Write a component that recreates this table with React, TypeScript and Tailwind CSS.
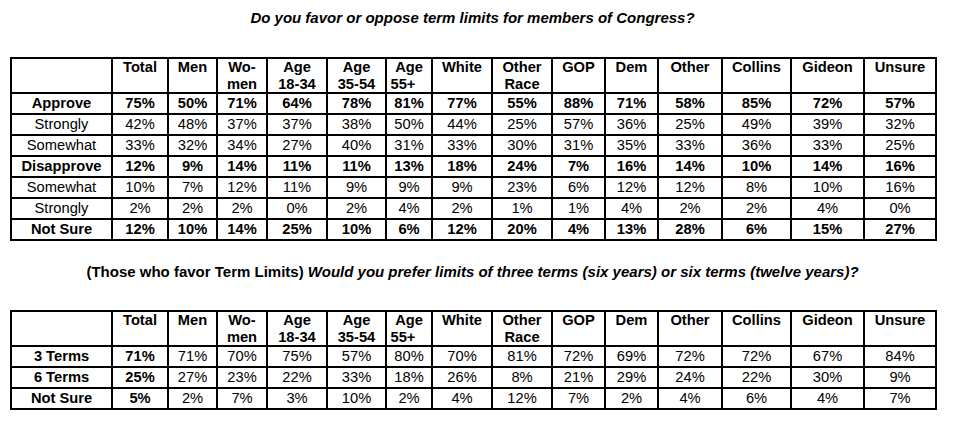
import React from "react";

const widths = [101, 56, 49, 50, 60, 59, 46, 60, 60, 53, 53, 64, 69, 73, 72];

const headers: React.ReactNode[] = [
  "",
  "Total",
  "Men",
  <>Wo-<br />men</>,
  <>Age<br />18-34</>,
  <>Age<br />35-54</>,
  <>Age<br /><span className="pr-[12px]">55+</span></>,
  "White",
  <>Other<br />Race</>,
  "GOP",
  "Dem",
  "Other",
  "Collins",
  "Gideon",
  "Unsure",
];

type Row = { label: string; values: number[]; bold: boolean; boldTotal?: boolean };

const table1: Row[] = [
  { label: "Approve", bold: true, values: [75, 50, 71, 64, 78, 81, 77, 55, 88, 71, 58, 85, 72, 57] },
  { label: "Strongly", bold: false, values: [42, 48, 37, 37, 38, 50, 44, 25, 57, 36, 25, 49, 39, 32] },
  { label: "Somewhat", bold: false, values: [33, 32, 34, 27, 40, 31, 33, 30, 31, 35, 33, 36, 33, 25] },
  { label: "Disapprove", bold: true, values: [12, 9, 14, 11, 11, 13, 18, 24, 7, 16, 14, 10, 14, 16] },
  { label: "Somewhat", bold: false, values: [10, 7, 12, 11, 9, 9, 9, 23, 6, 12, 12, 8, 10, 16] },
  { label: "Strongly", bold: false, values: [2, 2, 2, 0, 2, 4, 2, 1, 1, 4, 2, 2, 4, 0] },
  { label: "Not Sure", bold: true, values: [12, 10, 14, 25, 10, 6, 12, 20, 4, 13, 28, 6, 15, 27] },
];

const table2: Row[] = [
  { label: "3 Terms", bold: false, boldTotal: true, values: [71, 71, 70, 75, 57, 80, 70, 81, 72, 69, 72, 72, 67, 84] },
  { label: "6 Terms", bold: false, boldTotal: true, values: [25, 27, 23, 22, 33, 18, 26, 8, 21, 29, 24, 22, 30, 9] },
  { label: "Not Sure", bold: false, boldTotal: true, values: [5, 2, 7, 3, 10, 2, 4, 12, 7, 2, 4, 6, 4, 7] },
];

function DataTable({ rows }: { rows: Row[] }) {
  return (
    <table className="border-collapse table-fixed w-[925px] border-2 border-black text-[14.7px] text-black">
      <colgroup>
        {widths.map((w, i) => (
          <col key={i} style={{ width: w }} />
        ))}
      </colgroup>
      <thead>
        <tr>
          {headers.map((h, i) => (
            <th
              key={i}
              className="border-2 border-black p-0 align-top text-center font-bold leading-[16.5px] h-[33px]"
            >
              {h}
            </th>
          ))}
        </tr>
      </thead>
      <tbody>
        {rows.map((r, ri) => (
          <tr key={ri}>
            <td
              className={`border-2 border-black p-0 text-center leading-[19px] h-[19px] ${
                r.bold || r.boldTotal ? "font-bold" : "font-normal"
              }`}
            >
              {r.label}
            </td>
            {r.values.map((v, vi) => (
              <td
                key={vi}
                className={`border-2 border-black p-0 text-center leading-[19px] h-[19px] ${
                  r.bold || (r.boldTotal && vi === 0) ? "font-bold" : "font-normal"
                }`}
              >
                {v}%
              </td>
            ))}
          </tr>
        ))}
      </tbody>
    </table>
  );
}

export default function App() {
  return (
    <div
      className="w-[956px] h-[425px] bg-white overflow-hidden pl-[10px] pt-[9px]"
      style={{ fontFamily: '"Liberation Sans", Arial, Helvetica, sans-serif' }}
    >
      <div className="w-[925px] flex flex-col">
        <p className="text-center text-[15px] leading-[17px] font-bold italic text-black">
          Do you favor or oppose term limits for members of Congress?
        </p>
        <div className="mt-[31px]">
          <DataTable rows={table1} />
        </div>
        <p className="mt-[22px] text-center text-[15px] leading-[17px] font-bold text-black">
          (Those who favor Term Limits){" "}
          <span className="italic">
            Would you prefer limits of three terms (six years) or six terms (twelve years)?
          </span>
        </p>
        <div className="mt-[30px]">
          <DataTable rows={table2} />
        </div>
      </div>
    </div>
  );
}
